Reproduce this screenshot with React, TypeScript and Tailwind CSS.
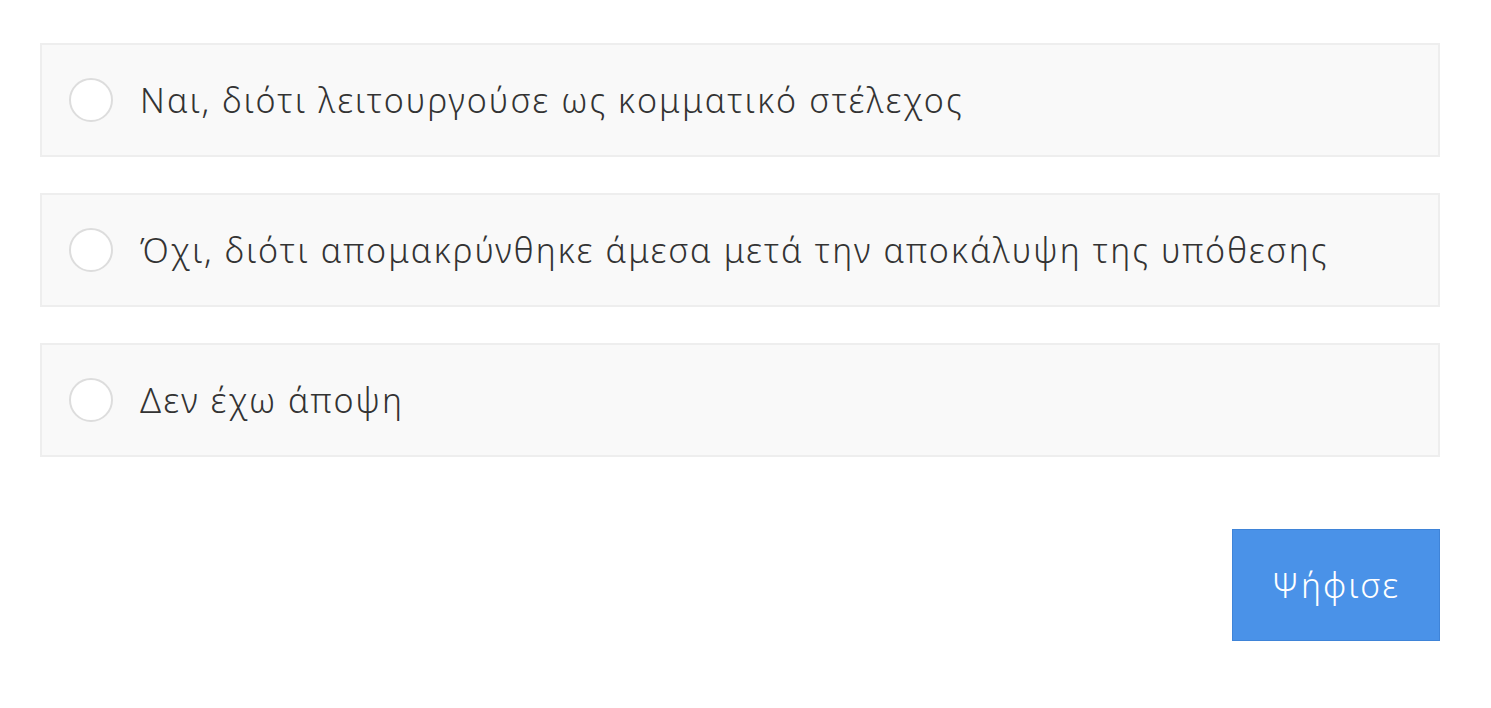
import React, { useState } from "react";

const options = [
  "Ναι, διότι λειτουργούσε ως κομματικό στέλεχος",
  "Όχι, διότι απομακρύνθηκε άμεσα μετά την αποκάλυψη της υπόθεσης",
  "Δεν έχω άποψη",
];

export default function App() {
  const [selected, setSelected] = useState<number | null>(null);

  return (
    <div
      className="w-full min-h-screen bg-white pl-[40px] pr-[51px] pt-[43px]"
      style={{ fontFamily: '"Noto Sans", "DejaVu Sans", sans-serif' }}
    >
      <div className="flex flex-col gap-[36px]">
        {options.map((opt, i) => (
          <label
            key={i}
            className="flex items-center h-[114px] border-2 border-[#eeeeee] bg-[#f9f9f9] pl-[27px] cursor-pointer"
          >
            <span
              onClick={() => setSelected(i)}
              className={`w-[44px] h-[44px] rounded-full border-2 border-[#dddddd] bg-white shrink-0 ${
                selected === i ? "ring-4 ring-inset ring-[#4a90e2]" : ""
              }`}
            />
            <span className="ml-[27px] text-[34px] font-[350] text-[#333333] tracking-[2.1px]">
              {opt}
            </span>
          </label>
        ))}
      </div>
      <div className="flex justify-end mt-[72px]">
        <button className="w-[208px] h-[112px] bg-[#4a92e8] border border-[#3f84d8] text-white text-[34px] font-[350] tracking-[2.2px]">
          Ψήφισε
        </button>
      </div>
    </div>
  );
}
